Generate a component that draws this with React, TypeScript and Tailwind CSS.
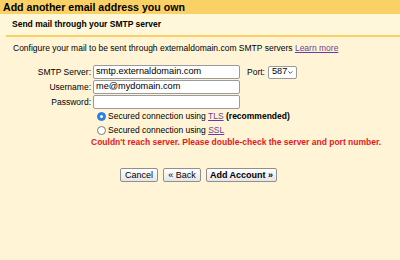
import { ChevronDown } from "lucide-react";

const font = "font-['Liberation_Sans',Arial,sans-serif]";

function Field({ label, value }: { label: string; value?: string }) {
  return (
    <div className="flex h-[14px] items-center">
      <label className="w-[80px] pr-[2px] text-right">{label}</label>
      <div className="flex h-[14px] w-[147px] items-center rounded-[2px] border border-[#9a9a9a] bg-white px-[2px] text-[9.2px] leading-none text-black">
        {value}
      </div>
    </div>
  );
}

function Radio({ checked }: { checked?: boolean }) {
  return (
    <span
      className={`flex h-[9px] w-[9px] shrink-0 items-center justify-center rounded-full border ${
        checked ? "border-[#2a7fe8] bg-[#2a7fe8]" : "border-[#7a7a7a] bg-white"
      }`}
    >
      {checked && <span className="h-[3px] w-[3px] rounded-full bg-white" />}
    </span>
  );
}

function Btn({ children, bold, w }: { children: React.ReactNode; bold?: boolean; w: string }) {
  return (
    <button
      type="button"
      className={`flex h-[14px] items-center justify-center rounded-[2px] border border-[#8f8f8f] bg-gradient-to-b from-[#ffffff] to-[#e6e6e6] text-[9px] leading-none text-black ${w} ${
        bold ? "font-bold" : ""
      }`}
    >
      {children}
    </button>
  );
}

export default function App() {
  return (
    <div className={`flex h-[260px] w-[400px] flex-col bg-[#fff5d6] text-[8.5px] leading-[11px] text-black ${font}`}>
      <div className="flex h-[14px] items-center bg-[#fad165] pl-[3px] text-[10.6px] font-bold leading-[14px]">
        Add another email address you own
      </div>
      <div className="flex h-[21px] items-center bg-[#fff7d9] pl-[12px] font-bold">
        Send mail through your SMTP server
      </div>
      <div className="ml-[6px] h-[2px] bg-[#fad165]" />
      <div className="pl-[13px] pt-[6px]">
        Configure your mail to be sent through externaldomain.com SMTP servers{" "}
        <a className="text-[#6a3da0] underline">Learn more</a>
      </div>

      <div className="mt-[11px] flex flex-col gap-px pl-[13px]">
        <div className="flex items-center">
          <Field label="SMTP Server:" value="smtp.externaldomain.com" />
          <span className="ml-[7px] mr-[3px]">Port:</span>
          <div className="flex h-[13px] w-[29px] items-center justify-between rounded-[2px] border border-[#9a9a9a] bg-white pl-[3px] pr-[2px] text-[9.2px] leading-none">
            587
            <ChevronDown size={9} strokeWidth={2.5} />
          </div>
        </div>
        <Field label="Username:" value="me@mydomain.com" />
        <Field label="Password:" />
      </div>

      <div className="flex flex-col pl-[97px]">
        <div className="flex h-[14px] items-center gap-[2px]">
          <Radio checked />
          <span>
            Secured connection using <a className="text-[#6a3da0] underline">TLS</a>{" "}
            <b>(recommended)</b>
          </span>
        </div>
        <div className="flex h-[14px] items-center gap-[2px]">
          <Radio />
          <span>
            Secured connection using <a className="text-[#6a3da0] underline">SSL</a>
          </span>
        </div>
      </div>
      <div className="ml-[91px] mt-[-1px] h-[12px] font-bold leading-[12px] text-[#e8161b]">
        Couldn't reach server. Please double-check the server and port number.
      </div>

      <div className="ml-[120px] mt-[20px] flex gap-[5px]">
        <Btn w="w-[38px]">Cancel</Btn>
        <Btn w="w-[38px]">« Back</Btn>
        <Btn w="w-[71px]" bold>
          Add Account »
        </Btn>
      </div>
    </div>
  );
}
